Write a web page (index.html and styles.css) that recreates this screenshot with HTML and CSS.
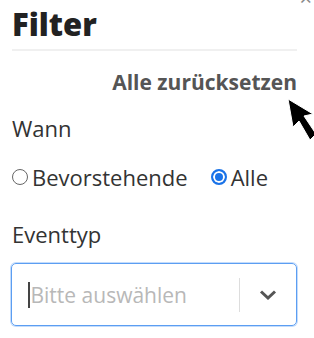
FILE: index.html
```html
<!DOCTYPE html>
<html>
<head>
    <meta charset="UTF-8">
    <title>Filter</title>
    <link rel="stylesheet" href="styles.css">
</head>

<body>
    <div class="panel">
        <span class="closeBtn">&times;</span>

        <div class="head">
            <h1 class="title">Filter</h1>
        </div>

        <div class="resetRow">
            <a href="#" class="resetLink">Alle zurücksetzen</a>
        </div>

        <div class="group">
            <div class="label">Wann</div>
            <div class="radios">
                <label class="radio"><span class="dot"></span>Bevorstehende</label>
                <label class="radio"><span class="dot on"></span>Alle</label>
            </div>
        </div>

        <div class="group second">
            <div class="label">Eventtyp</div>
            <div class="select">
                <div class="value"><span class="caret"></span>Bitte auswählen</div>
                <div class="sep"></div>
                <div class="arrow">
                    <svg width="18" height="10" viewBox="0 0 18 10">
                        <path d="M2 1.5 L9 8 L16 1.5" fill="none" stroke="#555" stroke-width="3"/>
                    </svg>
                </div>
            </div>
        </div>

        <svg class="cursor" width="40" height="60" viewBox="0 0 40 60">
            <path d="M8 9 L13 37 L19 31 L30 50 L36 44 L24 26 L33 24 Z" fill="#000" stroke="#fff" stroke-width="1"/>
        </svg>
    </div>
</body>
</html>
```

FILE: styles.css
```css
* {
    margin: 0;
    padding: 0;
    box-sizing: border-box;
}

body {
    background: #fff;
    font-family: "Open Sans", "Noto Sans", sans-serif;
    color: #333;
    overflow: hidden;
}

.panel {
    position: relative;
    width: 314px;
    height: 338px;
    padding: 0 17px 0 12px;
}

/* 닫기 버튼 (위쪽이 잘려 있음) */
.closeBtn {
    position: absolute;
    top: -14px;
    right: 2px;
    font-size: 22px;
    line-height: 22px;
    color: #888;
}

.head {
    padding-top: 6px;
    height: 51px;
    border-bottom: 2px solid #f0f0f0;
}

.title {
    font-size: 31px;
    font-weight: 800;
    color: #222;
    line-height: 36px;
}

.resetRow {
    text-align: right;
    padding-top: 18px;
}

.resetLink {
    font-size: 21px;
    font-weight: 700;
    color: #555;
    text-decoration: none;
    line-height: 26px;
}

.group {
    margin-top: 20px;
}

.label {
    font-size: 22px;
    line-height: 26px;
    color: #333;
}

.radios {
    display: flex;
    gap: 23px;
    margin-top: 23px;
}

.radio {
    display: flex;
    align-items: center;
    gap: 4px;
    font-size: 22px;
    line-height: 26px;
}

.dot {
    display: block;
    flex: 0 0 16px;
    width: 16px;
    height: 16px;
    border-radius: 50%;
    border: 1.5px solid #666;
}

.dot.on {
    border: 2px solid #1a73e8;
    background: #1a73e8;
    box-shadow: inset 0 0 0 2px #fff;
}

.second {
    margin-top: 31px;
}

.select {
    margin-top: 16px;
    height: 63px;
    width: 286px;
    margin-left: -1px;
    border: 1px solid #5c9ef2;
    box-shadow: 0 0 0 1px #c4dcfb;
    border-radius: 5px;
    display: flex;
    align-items: center;
}

.value {
    flex: 1;
    display: flex;
    align-items: center;
    padding-left: 16px;
    font-size: 21px;
    color: #b8b8b8;
}

.caret {
    width: 1.5px;
    height: 26px;
    background: #444;
    margin-right: 1px;
}

.sep {
    width: 1px;
    height: 34px;
    background: #ddd;
}

.arrow {
    width: 56px;
    display: flex;
    justify-content: center;
}

.cursor {
    position: absolute;
    left: 280px;
    top: 90px;
}
```
